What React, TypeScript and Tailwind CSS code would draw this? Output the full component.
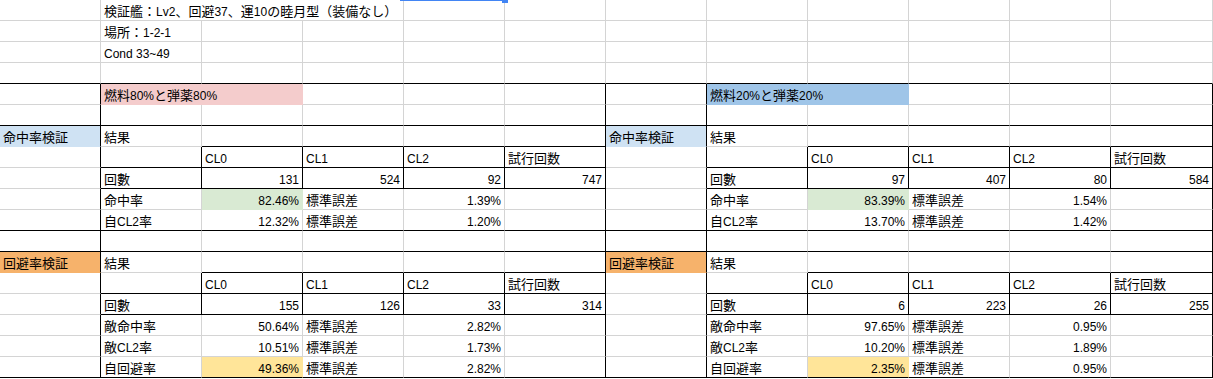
import React from "react";

type FillName = "pink" | "blue" | "lightBlue" | "green" | "orange" | "yellow";

const FILLS: Record<FillName, { bg: string; b: string; r: string }> = {
  pink: { bg: "bg-[#f4cccc]", b: "border-b-[#f4cccc]", r: "border-r-[#f4cccc]" },
  blue: { bg: "bg-[#9fc5e8]", b: "border-b-[#9fc5e8]", r: "border-r-[#9fc5e8]" },
  lightBlue: { bg: "bg-[#cfe2f3]", b: "border-b-[#cfe2f3]", r: "border-r-[#cfe2f3]" },
  green: { bg: "bg-[#d9ead3]", b: "border-b-[#d9ead3]", r: "border-r-[#d9ead3]" },
  orange: { bg: "bg-[#f6b26b]", b: "border-b-[#f6b26b]", r: "border-r-[#f6b26b]" },
  yellow: { bg: "bg-[#ffe599]", b: "border-b-[#ffe599]", r: "border-r-[#ffe599]" },
};

interface Cell {
  text: string;
  num?: boolean;
  fill?: FillName;
  span?: number;
}

const ROWS = 18;
const COLS = 12;

const blocks = [
  {
    off: 0,
    title: "燃料80%と弾薬80%",
    titleFill: "pink" as FillName,
    hit: ["131", "524", "92", "747", "82.46%", "1.39%", "12.32%", "1.20%"],
    eva: ["155", "126", "33", "314", "50.64%", "2.82%", "10.51%", "1.73%", "49.36%", "2.82%"],
  },
  {
    off: 6,
    title: "燃料20%と弾薬20%",
    titleFill: "blue" as FillName,
    hit: ["97", "407", "80", "584", "83.39%", "1.54%", "13.70%", "1.42%"],
    eva: ["6", "223", "26", "255", "97.65%", "0.95%", "10.20%", "1.89%", "2.35%", "0.95%"],
  },
];

const cells: Record<string, Cell> = {};
const put = (r: number, c: number, text: string, opts: Partial<Cell> = {}) => {
  cells[`${r},${c}`] = { text, ...opts };
};

put(0, 1, "検証艦：Lv2、回避37、運10の睦月型（装備なし）", { span: 3 });
put(1, 1, "場所：1-2-1");
put(2, 1, "Cond 33~49");

for (const b of blocks) {
  const o = b.off;
  put(4, o + 1, b.title, { fill: b.titleFill, span: 2 });

  // 命中率
  put(6, o, "命中率検証", { fill: "lightBlue" });
  put(6, o + 1, "結果");
  ["CL0", "CL1", "CL2", "試行回数"].forEach((t, i) => put(7, o + 2 + i, t));
  put(8, o + 1, "回數");
  b.hit.slice(0, 4).forEach((t, i) => put(8, o + 2 + i, t, { num: true }));
  put(9, o + 1, "命中率");
  put(9, o + 2, b.hit[4], { num: true, fill: "green" });
  put(9, o + 3, "標準誤差");
  put(9, o + 4, b.hit[5], { num: true });
  put(10, o + 1, "自CL2率");
  put(10, o + 2, b.hit[6], { num: true });
  put(10, o + 3, "標準誤差");
  put(10, o + 4, b.hit[7], { num: true });

  // 回避率
  put(12, o, "回避率検証", { fill: "orange" });
  put(12, o + 1, "結果");
  ["CL0", "CL1", "CL2", "試行回数"].forEach((t, i) => put(13, o + 2 + i, t));
  put(14, o + 1, "回數");
  b.eva.slice(0, 4).forEach((t, i) => put(14, o + 2 + i, t, { num: true }));
  const labels = ["敵命中率", "敵CL2率", "自回避率"];
  labels.forEach((l, i) => {
    const r = 15 + i;
    put(r, o + 1, l);
    put(r, o + 2, b.eva[4 + i * 2], { num: true, fill: i === 2 ? "yellow" : undefined });
    put(r, o + 3, "標準誤差");
    put(r, o + 4, b.eva[5 + i * 2], { num: true });
  });
}

// thick (black) border below row r at column c
const hBlack = (r: number, c: number) => {
  const local = c % 6;
  if ([3, 5, 10, 11, 17].includes(r)) return true;
  if (r === 6 || r === 12) return local >= 2;
  if ([7, 8, 13, 14].includes(r)) return local >= 1;
  return false;
};

// black border right of column c at row r
const vBlack = (r: number, c: number) => {
  if (r < 4) return false;
  const local = c % 6;
  if (local === 0 || local === 5) return true;
  if (r === 7 || r === 13) return local >= 1;
  if (r === 8 || r === 14) return true;
  return false;
};

// CJK glyphs render a bit larger than the latin text in the sheet
const Rich = ({ text }: { text: string }) => {
  const parts = text.split(/([\u3000-\u9fff\uff00-\uffef]+)/).filter(Boolean);
  return (
    <>
      {parts.map((p, i) =>
        /[\u3000-\u9fff\uff00-\uffef]/.test(p) ? (
          <span key={i} className="text-[13px]">
            {p}
          </span>
        ) : (
          <span key={i}>{p}</span>
        )
      )}
    </>
  );
};

export default function App() {
  const out: React.ReactNode[] = [];
  for (let r = 0; r < ROWS; r++) {
    let c = 0;
    while (c < COLS) {
      const cell = cells[`${r},${c}`];
      const span = cell?.span ?? 1;
      const last = c + span - 1;
      const fill = cell?.fill ? FILLS[cell.fill] : undefined;
      const bCls = hBlack(r, c) ? "border-b-black" : fill ? fill.b : "border-b-[#d4d4d4]";
      const rCls = vBlack(r, last) ? "border-r-black" : fill ? fill.r : "border-r-[#d4d4d4]";
      out.push(
        <div
          key={`${r}-${c}`}
          className={`flex items-end whitespace-nowrap overflow-visible border-r border-b px-[3px] text-[12px] leading-[16px] text-black ${bCls} ${rCls} ${
            fill ? fill.bg : ""
          } ${cell?.num ? "justify-end" : "justify-start"} ${
            span === 3 ? "col-span-3" : span === 2 ? "col-span-2" : ""
          }`}
        >
          {cell ? <Rich text={cell.text} /> : null}
        </div>
      );
      c += span;
    }
  }

  return (
    <div className="relative w-[1213px] h-[379px] overflow-hidden bg-white font-[Liberation_Sans,Noto_Sans_CJK_JP,sans-serif]">
      <div className="grid grid-cols-[repeat(11,101px)_102px] grid-rows-[repeat(18,21px)]">{out}</div>
      {/* selected cell edge peeking from above */}
      <div className="absolute left-[400px] top-0 w-[102px] h-[1px] bg-[#4285f4]" />
      <div className="absolute left-[502px] top-0 w-[6px] h-[3px] bg-[#4285f4]" />
    </div>
  );
}
